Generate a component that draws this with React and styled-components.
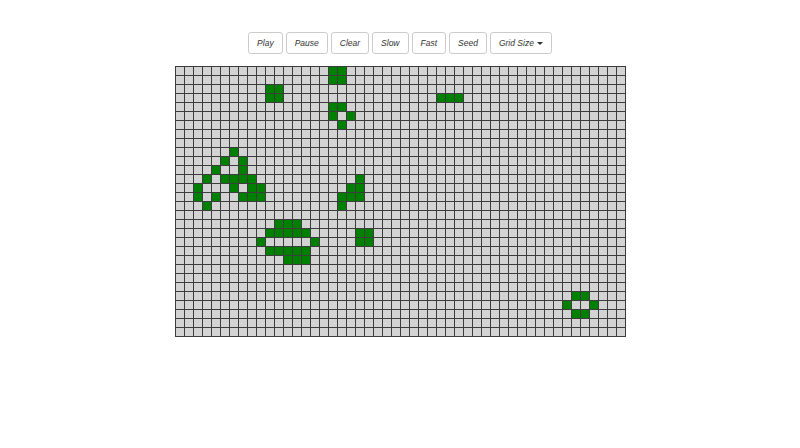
import React from "react";
import styled, { createGlobalStyle } from "styled-components";

const GlobalStyle = createGlobalStyle`
  html, body { margin: 0; padding: 0; background: #fff; }
  body { font-family: "Liberation Sans", Arial, sans-serif; }
`;

const Page = styled.div`
  padding-top: 32px;
  display: flex;
  flex-direction: column;
  align-items: center;
`;

const Toolbar = styled.div`
  display: flex;
  gap: 3px;
`;

const Button = styled.button`
  box-sizing: border-box;
  height: 22px;
  padding: 0 8px;
  display: inline-flex;
  align-items: center;
  background: #fff;
  border: 1px solid #ccc;
  border-radius: 3px;
  color: #333;
  font-family: "Liberation Sans", Arial, sans-serif;
  font-style: italic;
  font-size: 8.5px;
  cursor: pointer;
`;

const Caret = styled.span`
  display: inline-block;
  width: 0;
  height: 0;
  margin-left: 3px;
  border-top: 3px solid #333;
  border-left: 3px solid transparent;
  border-right: 3px solid transparent;
`;

const Board = styled.div`
  margin-top: 12px;
  display: grid;
  grid-template-columns: repeat(${(p) => p.$cols}, 9px);
  grid-auto-rows: 9px;
  border-left: 1px solid #3c3c3c;
  border-top: 1px solid #3c3c3c;
`;

const Cell = styled.div`
  box-sizing: border-box;
  width: 9px;
  height: 9px;
  border-right: 1px solid #3c3c3c;
  border-bottom: 1px solid #3c3c3c;
  background: ${(p) => (p.$on ? "#008000" : "#d3d3d3")};
`;

const COLS = 50;
const ROWS = 30;

const LIVE = {
  0: [17, 18],
  1: [17, 18],
  2: [10, 11],
  3: [10, 11, 29, 30, 31],
  4: [17, 18],
  5: [17, 19],
  6: [18],
  9: [6],
  10: [5, 7],
  11: [4, 7],
  12: [3, 5, 6, 7, 8, 20],
  13: [2, 6, 8, 9, 19, 20],
  14: [2, 4, 7, 8, 9, 18, 19, 20],
  15: [3, 18],
  17: [11, 12, 13],
  18: [10, 11, 12, 13, 14, 20, 21],
  19: [9, 15, 20, 21],
  20: [10, 11, 12, 13, 14],
  21: [12, 13, 14],
  25: [44, 45],
  26: [43, 46],
  27: [44, 45],
};

export default function App() {
  const cells = [];
  for (let r = 0; r < ROWS; r++) {
    const live = LIVE[r] || [];
    for (let c = 0; c < COLS; c++) {
      cells.push(<Cell key={`${r}-${c}`} $on={live.includes(c)} />);
    }
  }
  return (
    <>
      <GlobalStyle />
      <Page>
        <Toolbar>
          <Button>Play</Button>
          <Button>Pause</Button>
          <Button>Clear</Button>
          <Button>Slow</Button>
          <Button>Fast</Button>
          <Button>Seed</Button>
          <Button>
            Grid Size
            <Caret />
          </Button>
        </Toolbar>
        <Board $cols={COLS}>{cells}</Board>
      </Page>
    </>
  );
}
